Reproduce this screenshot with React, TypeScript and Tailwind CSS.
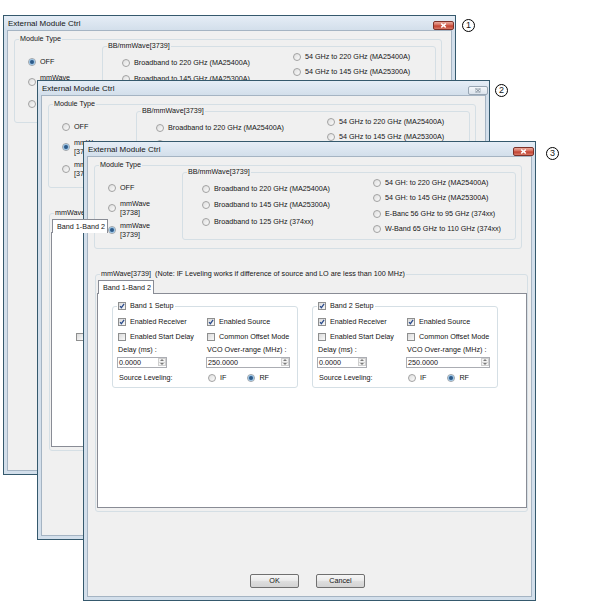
import React from "react";

type Mode = "off" | "3738" | "3739";

function Radio({ on }: { on?: boolean }) {
  return (
    <span className="flex h-[8px] w-[8px] shrink-0 items-center justify-center rounded-full border border-[#a2a2a2] bg-[linear-gradient(135deg,#dedede,#fbfbfb)]">
      {on && <span className="h-[4px] w-[4px] rounded-full bg-[#2d5a88] shadow-[0_0_1px_1px_#8fbde3]" />}
    </span>
  );
}

function Check({ on }: { on?: boolean }) {
  return (
    <span className="flex h-[8px] w-[8px] shrink-0 items-center justify-center border border-[#8e8f8f] bg-[linear-gradient(135deg,#dadada,#f9f9f9)]">
      {on && (
        <svg width="6" height="6" viewBox="0 0 6 6">
          <path d="M1 3.1 L2.4 4.7 L5.1 0.9" stroke="#28498a" strokeWidth="1.2" fill="none" />
        </svg>
      )}
    </span>
  );
}

function RadioItem({ on, children, className = "" }: { on?: boolean; children: React.ReactNode; className?: string }) {
  return (
    <div className={`flex h-[10px] items-center gap-[4px] ${className}`}>
      <Radio on={on} />
      <span className="whitespace-nowrap leading-[10px]">{children}</span>
    </div>
  );
}

function RadioItem2({ on, l1, l2, className = "" }: { on?: boolean; l1: string; l2: string; className?: string }) {
  return (
    <div className={`flex items-center gap-[4px] ${className}`}>
      <Radio on={on} />
      <div className="flex flex-col whitespace-nowrap leading-[9px]">
        <span>{l1}</span>
        <span>{l2}</span>
      </div>
    </div>
  );
}

function CheckItem({ on, children }: { on?: boolean; children: React.ReactNode }) {
  return (
    <div className="flex h-[10px] items-center gap-[4px]">
      <Check on={on} />
      <span className="whitespace-nowrap leading-[10px]">{children}</span>
    </div>
  );
}

function Group({
  label,
  labelBg,
  className = "",
  children,
}: {
  label: React.ReactNode;
  labelBg: string;
  className?: string;
  children?: React.ReactNode;
}) {
  return (
    <div className={`relative shrink-0 rounded-[3px] border border-[#d5dfe5] ${className}`}>
      <div className={`absolute left-[4px] top-[-6px] whitespace-pre px-[1px] leading-[10px] ${labelBg}`}>{label}</div>
      {children}
    </div>
  );
}

function Spin({ value, className = "" }: { value: string; className?: string }) {
  return (
    <div className={`flex h-[11px] items-stretch border border-[#abadb3] bg-white ${className}`}>
      <span className="flex-1 pl-[1px] leading-[9px]">{value}</span>
      <div className="my-[0.5px] mr-[0.5px] flex w-[8px] flex-col border border-[#cfcfcf] bg-[#f3f3f3]">
        <div className="flex flex-1 items-center justify-center border-b border-[#d4d4d4]">
          <svg width="4" height="2" viewBox="0 0 4 2">
            <path d="M0 2 L2 0 L4 2Z" fill="#7a7a7a" />
          </svg>
        </div>
        <div className="flex flex-1 items-center justify-center">
          <svg width="4" height="2" viewBox="0 0 4 2">
            <path d="M0 0 L2 2 L4 0Z" fill="#7a7a7a" />
          </svg>
        </div>
      </div>
    </div>
  );
}

function Band({ n }: { n: number }) {
  return (
    <Group
      className="h-[82px] w-[186px]"
      labelBg="bg-white"
      label={
        <span className="flex items-center gap-[4px]">
          <Check on />
          <span>Band {n} Setup</span>
        </span>
      }
    >
      <div className="flex flex-col pl-[5px] pt-[10px]">
        <div className="grid h-[10px] grid-cols-[89px_1fr]">
          <CheckItem on>Enabled Receiver</CheckItem>
          <CheckItem on>Enabled Source</CheckItem>
        </div>
        <div className="mt-[5px] grid h-[10px] grid-cols-[89px_1fr]">
          <CheckItem>Enabled Start Delay</CheckItem>
          <CheckItem>Common Offset Mode</CheckItem>
        </div>
        <div className="mt-[3px] grid h-[10px] grid-cols-[89px_1fr] leading-[10px]">
          <span>Delay (ms) :</span>
          <span>VCO Over-range (MHz) :</span>
        </div>
        <div className="mt-[1.5px] grid grid-cols-[89px_1fr]">
          <Spin value="0.0000" className="-ml-[1px] w-[50px]" />
          <Spin value="250.0000" className="-ml-[1px] w-[84px]" />
        </div>
        <div className="mt-[5.5px] grid h-[10px] grid-cols-[89px_1fr] items-center">
          <span className="pl-[1px] leading-[10px]">Source Leveling:</span>
          <div className="flex items-center pl-[1px]">
            <Radio />
            <span className="ml-[4px] leading-[10px]">IF</span>
            <span className="ml-[21px] flex">
              <Radio on />
            </span>
            <span className="ml-[4px] leading-[10px]">RF</span>
          </div>
        </div>
      </div>
    </Group>
  );
}

function Close({ kind }: { kind: "red" | "gray" }) {
  if (kind === "red")
    return (
      <div className="mt-[5px] flex h-[9px] w-[21px] items-center justify-center rounded-[2px] border border-[#7d3128] bg-[linear-gradient(#eaa89a,#d46b5b_45%,#c2402e_55%,#d87a69)]">
        <svg width="7" height="5" viewBox="0 0 7 5">
          <path d="M1.2 0.6 L5.8 4.4 M5.8 0.6 L1.2 4.4" stroke="white" strokeWidth="1.4" />
        </svg>
      </div>
    );
  return (
    <div className="mt-[5px] flex h-[9px] w-[20px] items-center justify-center rounded-[2px] border border-[#98a6b4] bg-[linear-gradient(#f4f7fa,#dbe3ec)]">
      <svg width="6" height="5" viewBox="0 0 6 5">
        <path d="M1 0.7 L5 4.3 M5 0.7 L1 4.3" stroke="#7f8b97" strokeWidth="1" />
        <rect x="0.5" y="0.5" width="5" height="4" fill="none" stroke="#a9b4bf" strokeWidth="0.6" />
      </svg>
    </div>
  );
}

function Dialog({ mode, className, close }: { mode: Mode; className: string; close: "red" | "gray" }) {
  const left = ["Broadband to 220 GHz (MA25400A)", "Broadband to 145 GHz (MA25300A)", "Broadband to 125 GHz (374xx)"];
  const right =
    mode === "3739"
      ? ["54 GH: to 220 GHz (MA25400A)", "54 GH: to 145 GHz (MA25300A)", "E-Banc 56 GHz to 95 GHz (374xx)", "W-Band 65 GHz to 110 GHz (374xx)"]
      : ["54 GHz to 220 GHz (MA25400A)", "54 GHz to 145 GHz (MA25300A)", "E-Band 56 GHz to 95 GHz (374xx)", "W-Band 65 GHz to 110 GHz (374xx)"];
  const groupLabel =
    mode === "3739"
      ? "mmWave[3739]  (Note: IF Leveling works if difference of source and LO are less than 100 MHz)"
      : "mmWave[3738]  (Note: IF Leveling works if difference of source and LO are less than 100 MHz)";
  return (
    <div className={`absolute flex h-[460px] w-[453px] flex-col border border-[#35596d] bg-[#d3dfeb] ${className}`}>
      <div className="flex h-[14px] shrink-0 items-start justify-between bg-[linear-gradient(#e5edf6,#d3dfeb)] pl-[4px] pr-[1px]">
        <span className="mt-[3px] text-[8px] leading-[9px]">External Module Ctrl</span>
        <Close kind={close} />
      </div>
      <div className="mx-[3px] mb-[3px] flex flex-1 flex-col border border-[#a5b4c3] bg-[#f0f0f0] pl-[6px] pt-[8px]">
        <Group className="h-[84px] w-[428px]" labelBg="bg-[#f0f0f0]" label="Module Type">
          <div className="flex">
            <div className="flex w-[87px] shrink-0 flex-col pl-[13px] pt-[17px]">
              <RadioItem on={mode === "off"}>OFF</RadioItem>
              <RadioItem2 className="mt-[6px]" on={mode === "3738"} l1="mmWave" l2="[3738]" />
              <RadioItem2 className="mt-[4px]" on={mode === "3739"} l1="mmWave" l2="[3739]" />
            </div>
            <Group className="mt-[6px] h-[68px] w-[334px]" labelBg="bg-[#f0f0f0]" label="BB/mmWave[3739]">
              <div className="flex">
                <div className="flex w-[190px] shrink-0 flex-col gap-[6.3px] pl-[19px] pt-[11px]">
                  {left.map((t) => (
                    <RadioItem key={t}>{t}</RadioItem>
                  ))}
                </div>
                <div className="flex flex-col gap-[5.3px] pt-[5px]">
                  {right.map((t) => (
                    <RadioItem key={t}>{t}</RadioItem>
                  ))}
                </div>
              </div>
            </Group>
          </div>
        </Group>

        {mode === "off" ? (
          <div className="mt-[25px] h-[238px] w-[433px]" />
        ) : (
          <Group className="ml-[1px] mt-[25px] h-[238px] w-[433px]" labelBg="bg-[#f0f0f0]" label={groupLabel}>
            <div className="flex flex-col pl-[1px] pt-[5px]">
              <div className="relative z-[1] -mb-[1px] ml-[1px] flex h-[14px] w-[56px] items-center border border-b-0 border-[#898c95] bg-white pl-[4px] leading-[10px]">
                Band 1-Band 2
              </div>
              <div className="h-[215px] w-[430px] border border-[#898c95] bg-white">
                {mode === "3739" ? (
                  <div className="flex gap-[14px] pl-[14px] pt-[12px]">
                    <Band n={1} />
                    <Band n={2} />
                  </div>
                ) : (
                  <div className="flex flex-col pl-[24px] pt-[100px]">
                    <Check />
                  </div>
                )}
              </div>
            </div>
          </Group>
        )}

        <div className="mt-[62px] flex justify-center gap-[17px] pr-[10px]">
          <div className="h-[14px] w-[49px] rounded-[2px] border border-[#707070] bg-[linear-gradient(#f6f6f6,#ebebeb_45%,#dddddd_55%,#d3d3d3)] text-center leading-[12px]">
            OK
          </div>
          <div className="h-[14px] w-[49px] rounded-[2px] border border-[#707070] bg-[linear-gradient(#f6f6f6,#ebebeb_45%,#dddddd_55%,#d3d3d3)] text-center leading-[12px]">
            Cancel
          </div>
        </div>
      </div>
    </div>
  );
}

function Num({ n, className }: { n: string; className: string }) {
  return (
    <div className={`absolute flex h-[13px] w-[13px] items-center justify-center rounded-full border border-black bg-white text-[9px] leading-none ${className}`}>
      {n}
    </div>
  );
}

export default function App() {
  return (
    <div className="relative h-[606px] w-[590px] overflow-hidden bg-white font-['Liberation_Sans',Arial,sans-serif] text-[7.2px] text-[#151515]">
      <Dialog mode="off" className="left-[3px] top-[15px]" close="red" />
      <Num n="1" className="left-[462px] top-[19px]" />
      <Dialog mode="3738" className="left-[37px] top-[80px]" close="gray" />
      <Num n="2" className="left-[495px] top-[84px]" />
      <Dialog mode="3739" className="left-[83px] top-[141px]" close="red" />
      <Num n="3" className="left-[546px] top-[147px]" />
    </div>
  );
}
